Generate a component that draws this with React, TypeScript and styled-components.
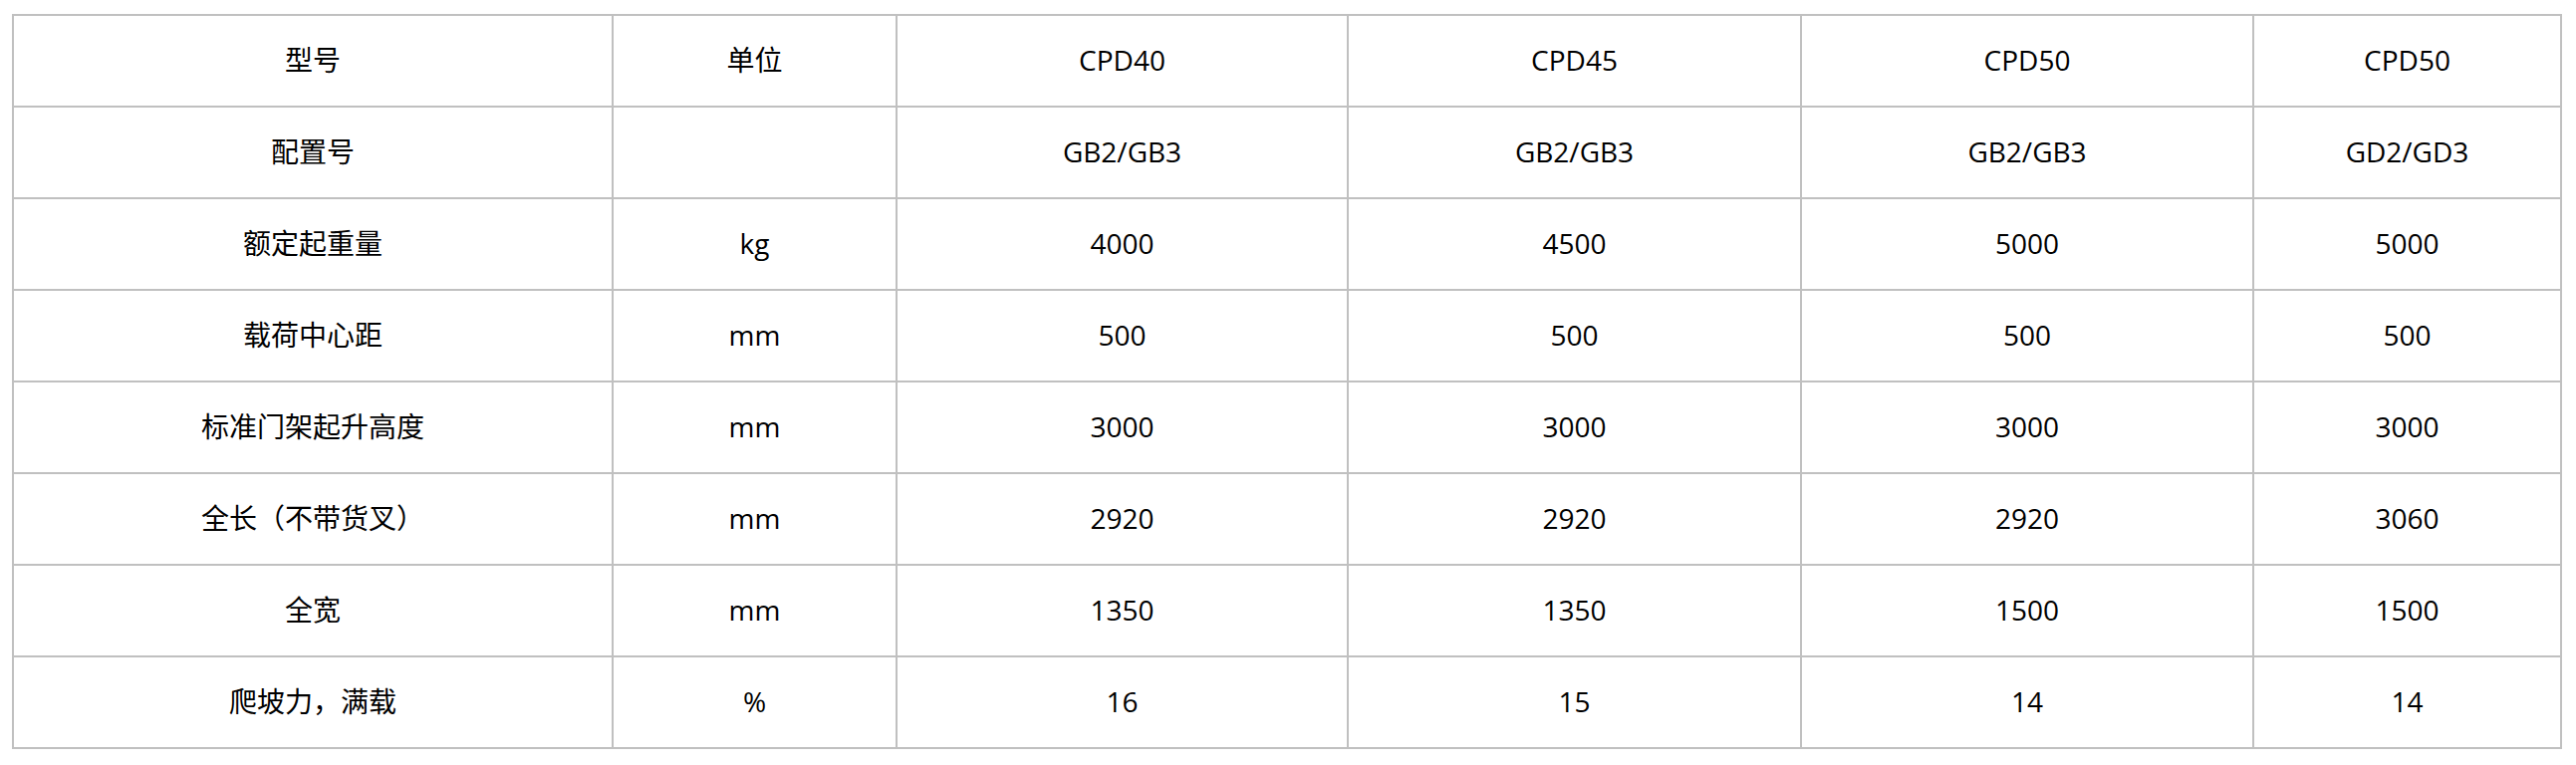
import React from "react";
import styled, { createGlobalStyle } from "styled-components";

const GlobalStyle = createGlobalStyle`
  html, body {
    margin: 0;
    padding: 0;
    background: #ffffff;
  }
  body {
    font-family: "Open Sans", "Noto Sans CJK SC", sans-serif;
    color: #000000;
  }
`;

const Page = styled.div`
  padding: 14px 0 0 12px;
`;

const SpecTable = styled.table`
  width: 2560px;
  table-layout: fixed;
  border-collapse: collapse;
  border: 2px solid #c0c0c0;
`;

const Cell = styled.td`
  height: 90px;
  padding: 0;
  border: 2px solid #c0c0c0;
  text-align: center;
  vertical-align: middle;
  font-family: "Open Sans", "Noto Sans CJK SC", sans-serif;
  font-size: 28px;
  line-height: 1.4;
  color: #000000;
`;

const widths = [602, 285, 453, 455, 454, 309];

const rows: string[][] = [
  ["型号", "单位", "CPD40", "CPD45", "CPD50", "CPD50"],
  ["配置号", "", "GB2/GB3", "GB2/GB3", "GB2/GB3", "GD2/GD3"],
  ["额定起重量", "kg", "4000", "4500", "5000", "5000"],
  ["载荷中心距", "mm", "500", "500", "500", "500"],
  ["标准门架起升高度", "mm", "3000", "3000", "3000", "3000"],
  ["全长（不带货叉）", "mm", "2920", "2920", "2920", "3060"],
  ["全宽", "mm", "1350", "1350", "1500", "1500"],
  ["爬坡力，满载", "%", "16", "15", "14", "14"],
];

export default function App() {
  return (
    <>
      <GlobalStyle />
      <Page>
        <SpecTable>
          <colgroup>
            {widths.map((w, i) => (
              <col key={i} style={{ width: `${w}px` }} />
            ))}
          </colgroup>
          <tbody>
            {rows.map((r, ri) => (
              <tr key={ri}>
                {r.map((c, ci) => (
                  <Cell key={ci}>{c}</Cell>
                ))}
              </tr>
            ))}
          </tbody>
        </SpecTable>
      </Page>
    </>
  );
}
